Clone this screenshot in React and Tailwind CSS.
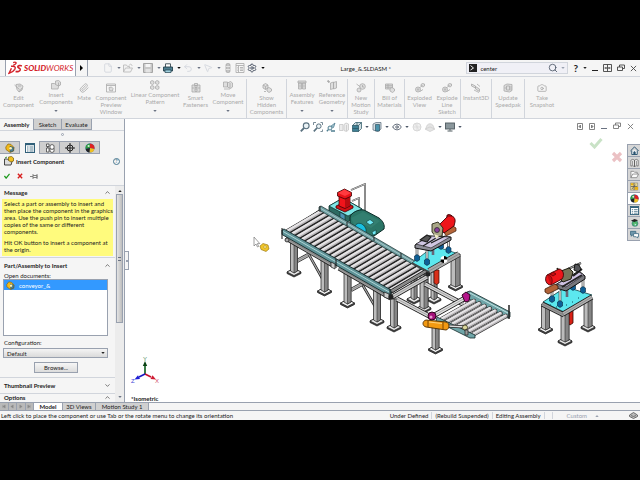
import React, { useState } from 'react';
import clsx from 'clsx';
import {
  Camera, ChevronDown, ChevronUp, Eye, File, MousePointer2, Paperclip, Search, Settings, Undo2,
} from 'lucide-react';

/* ---------- ribbon icons ---------- */

const gray = { fill: '#dedede', stroke: '#a9a9a9', strokeWidth: 0.8 };

const EditIcon = ({ className }) => (
  <svg viewBox="0 0 10 10" className={className} {...gray}>
    <path d="M2 1.500l4-.5 3 2-1 4-3 2-2-2.500z" /><path d="M.5 2l5 4.500M4 3h3M5 9l3-4" fill="none" />
  </svg>
);
const InsertIcon = ({ className }) => (
  <svg viewBox="0 0 10 10" className={className} {...gray}>
    <path d="M.5 9V3.500h3l1 1h3.500L7 9z" /><path d="M4.500 1l3-.5 2 1.500v3L7.500 6 4.500 4.500zM7.500 2.500V6" />
  </svg>
);
const PreviewIcon = ({ className }) => (
  <svg viewBox="0 0 10 10" className={className} {...gray}>
    <path d="M.5 1h9v8h-9z" fill="none" /><path d="M.5 2.500h9" /><path d="M3 4.500L5.500 4 7 5.500 6.500 8l-3-.5z" />
  </svg>
);
const PatternIcon = ({ className }) => (
  <svg viewBox="0 0 10 10" className={className} {...gray}>
    <path d="M.5 1.500l1.500-1 2 1v2l-1.500 1-2-1zM5.500 1.500l1.500-1 2 1v2l-1.500 1-2-1zM.5 6.500l1.500-1 2 1v2l-1.500 1-2-1zM5.500 6.500l1.500-1 2 1v2l-1.500 1-2-1z" />
  </svg>
);
const FastenerIcon = ({ className }) => (
  <svg viewBox="0 0 10 10" className={className} {...gray}>
    <path d="M1 2h8v7H1z" /><path d="M3.500.5h3v2h-3zM4 2.500h2V8L5 9 4 8zM4 4.500h2M4 6h2M1 5h2M7 5h2" />
  </svg>
);
const MoveIcon = ({ className }) => (
  <svg viewBox="0 0 10 10" className={className} {...gray}>
    <path d="M.5 2h4v5h-4zM4.500 3l3-1.500 2 1.500v4l-2 1.500-3-1.500zM7 3v5" /><path d="M1 9h6" fill="none" />
  </svg>
);
const PartsIcon = ({ className }) => (
  <svg viewBox="0 0 10 10" className={className} {...gray}>
    <path d="M1 2l2.500-1.500L6 2v3L3.500 6.500 1 5zM5 5.500l2-1 2.500 1.500v2L7 9.500 5 8z" /><path d="M1 2l2.500 1.500L6 2M3.500 3.500v3M2 8.500h2" fill="none" />
  </svg>
);
const FeatureIcon = ({ className }) => (
  <svg viewBox="0 0 10 10" className={className} {...gray}>
    <path d="M1 1h8v2H1zM1.500 3h3v6h-3zM5.500 3h3v6h-3z" /><path d="M3 4.500v3M7 4.500v3" />
  </svg>
);
const ReferenceIcon = ({ className }) => (
  <svg viewBox="0 0 10 10" className={className} {...gray}>
    <path d="M3.500 3l3-1v6.500l-3 1zM6.500 2.500l3-1V8l-3 1z" /><path d="M1.500 0v3M0 1.500h3M.5.5l2 2" fill="none" />
  </svg>
);
const MotionIcon = ({ className }) => (
  <svg viewBox="0 0 10 10" className={className} {...gray}>
    <circle cx="6.500" cy="3.500" r="2.800" /><circle cx="3" cy="7" r="2" /><path d="M.5 1l4 3M6.500 2v2h1.500" fill="none" />
  </svg>
);
const BillIcon = ({ className }) => (
  <svg viewBox="0 0 10 10" className={className} {...gray}>
    <path d="M.5 1h7v5h-7zM.5 2.700h7M.5 4.300h7M3 1v5" /><path d="M5 5.500l2-1 2.500 1.500v2L7.500 9.500 5 8z" />
  </svg>
);
const ExplodeIcon = ({ className }) => (
  <svg viewBox="0 0 10 10" className={className} {...gray}>
    <circle cx="3" cy="6.500" r="2.500" /><circle cx="3" cy="6.500" r="0.800" /><path d="M6 1.500l1.500-1L9.500 1v2L8 4 6 3z" /><path d="M4.500 5l3-3M5 8.500l3-2" fill="none" />
  </svg>
);
const InstantIcon = ({ className }) => (
  <svg viewBox="0 0 10 10" className={className} {...gray}>
    <path d="M.5 1l4 2v2l-4-2zM4.500 3.500l4 2.500v2.500l-4-2.500z" /><path d="M3 7l5 2.500M6 1l3 2.500" fill="none" />
  </svg>
);
const SpeedIcon = ({ className }) => (
  <svg viewBox="0 0 10 10" className={className} {...gray}>
    <path d="M1 2.500L4 1l5 .5v6L6.500 9 1 8z" /><path d="M3.500 3h3v4h-3zM8 3v4.500M1.500 5h2" />
  </svg>
);

const ribbonGroups = [
  [
    { label: ['Edit', 'Component'], icon: EditIcon, width: 'w-[37px]' },
    { label: ['Insert', 'Components'], icon: InsertIcon, width: 'w-[38px]', arrow: true },
    { label: ['Mate'], icon: Paperclip, width: 'w-[18px]' },
    { label: ['Component', 'Preview', 'Window'], icon: PreviewIcon, width: 'w-[36px]' },
    { label: ['Linear Component', 'Pattern'], icon: PatternIcon, width: 'w-[52px]', arrow: true },
    { label: ['Smart', 'Fasteners'], icon: FastenerIcon, width: 'w-[29px]' },
    { label: ['Move', 'Component'], icon: MoveIcon, width: 'w-[36px]', arrow: true },
  ],
  [{ label: ['Show', 'Hidden', 'Components'], icon: PartsIcon, width: 'w-[39px]' }],
  [
    { label: ['Assembly', 'Features'], icon: FeatureIcon, width: 'w-[30px]', arrow: true },
    { label: ['Reference', 'Geometry'], icon: ReferenceIcon, width: 'w-[30px]', arrow: true },
  ],
  [{ label: ['New', 'Motion', 'Study'], icon: MotionIcon, width: 'w-[26px]' }],
  [{ label: ['Bill of', 'Materials'], icon: BillIcon, width: 'w-[29px]' }],
  [
    { label: ['Exploded', 'View'], icon: ExplodeIcon, width: 'w-[29px]' },
    { label: ['Explode', 'Line', 'Sketch'], icon: ExplodeIcon, width: 'w-[26px]' },
  ],
  [{ label: ['Instant3D'], icon: InstantIcon, width: 'w-[30px]' }],
  [{ label: ['Update', 'Speedpak'], icon: SpeedIcon, width: 'w-[32px]' }],
  [{ label: ['Take', 'Snapshot'], icon: Camera, width: 'w-[34px]' }],
];

const Arrow = ({ className }) => (
  <svg viewBox="0 0 5 3" className={clsx('h-[2px] w-[4px] shrink-0', className)}>
    <path d="M0 0h5L2.500 3z" fill="currentColor" />
  </svg>
);

/* ---------- title bar ---------- */

const Logo = () => (
  <div className="flex h-full items-center gap-px border-x border-gray-400 bg-white px-[2px]">
    <svg viewBox="0 0 16 14" className="h-[14px] w-[15px]" fill="none" stroke="#d3222a">
      <path d="M5.500 1.200c2-.8 3.800-.4 3 1C7.900 3.200 6.600 3.800 5.500 4.200" strokeWidth="1.400" />
      <path d="M3.200 5.200c4-.6 5.300.9 4 3.200-1.200 2-3.700 3.600-6.200 4.300 1-2 2-3.700 2.600-5.400" strokeWidth="1.500" />
      <path d="M14.800 4.800c-2-.9-4.300-.3-4.400.9-.1 1.300 3.100 1.500 2.700 3.300-.4 1.600-3 2.300-5 1.600" strokeWidth="1.700" />
    </svg>
    <span className="text-[8px] leading-[10px] text-[#d3222a] italic">
      <b className="font-black">SOLID</b>WORKS
    </span>
  </div>
);

const OpenIcon = ({ className }) => (
  <svg viewBox="0 0 10 10" className={className} fill="#f2f2f2" stroke="#bcbcbc" strokeWidth="0.900">
    <path d="M.5 9V2h3l1 1.500h2V5M.5 9l2-4h7l-2 4z" /><path d="M6 2.500c1-2 3-1.500 3 .5" fill="none" />
  </svg>
);
const SaveIcon = ({ className }) => (
  <svg viewBox="0 0 10 10" className={className}>
    <path d="M.5.5h9v9h-9z" fill="#c9c9c9" stroke="#a5a5a5" />
    <path d="M2.500 1h5v3h-5z" fill="#f5f5f5" /><path d="M2.500 6h5v3.500h-5z" fill="#e4e4e4" />
  </svg>
);
const PrintIcon = ({ className }) => (
  <svg viewBox="0 0 10 10" className={className}>
    <path d="M2.500 4.500V.8h5v3.700" fill="#fff" stroke="#3a4b52" strokeWidth="0.900" />
    <path d="M.5 4h9v4h-9z" fill="#4f7f90" stroke="#24414d" strokeWidth="0.900" />
    <path d="M2 7h6v2.500H2z" fill="#9fd0de" stroke="#24414d" strokeWidth="0.700" />
  </svg>
);
const PillIcon = ({ className }) => (
  <svg viewBox="0 0 10 10" className={className}>
    <rect x="3" y="0.500" width="4" height="9" rx="1.500" fill="#c4c4c4" stroke="#a0a0a0" strokeWidth="0.700" />
    <path d="M3 3.500h4M3 6.500h4" stroke="#eee" strokeWidth="0.800" />
  </svg>
);
const SheetIcon = ({ className }) => (
  <svg viewBox="0 0 10 10" className={className} fill="#f6f6f6" stroke="#b0b0b0" strokeWidth="0.900">
    <path d="M1 .5h8v9H1zM1 2.500h8M3.500 2.500v7M5 4.500h3M5 6h3M5 7.500h3M2 4.500h.6M2 6h.6M2 7.500h.6" />
  </svg>
);

const QuickButton = ({ icon: Icon, label, tone = 'text-gray-300', arrow = true, dark }) => (
  <button aria-label={label} className="flex items-center gap-[4px]">
    <Icon className={clsx('size-[10px]', tone)} strokeWidth={2} />
    {arrow && <Arrow className={dark ? 'text-black' : 'text-gray-500'} />}
  </button>
);

const WindowIcons = ({ stroke = '#444', split }) => (
  <>
    <button aria-label="Minimize" className="flex h-[10px] w-[6px] items-end pb-[2px]">
      <span className="h-px w-full bg-current" />
    </button>
    {split && (
      <button aria-label="Tile">
        <svg viewBox="0 0 9 8" className="h-[8px] w-[9px]" fill="none" stroke={stroke} strokeWidth="0.900">
          <path d="M.5.5h8v7h-8zM4.500.5v7M1.500 4h2M5.500 4h2M3 3v2M6 3v2" />
        </svg>
      </button>
    )}
    <button aria-label="Restore">
      <svg viewBox="0 0 8 8" className="size-[8px]" fill="none" stroke={stroke} strokeWidth="0.900">
        <path d="M2.500 3V1h5v3.500H5.500M.5 3h5v3.500h-5z" />
      </svg>
    </button>
    <button aria-label="Close">
      <svg viewBox="0 0 8 8" className="size-[7px]" fill="none" stroke={stroke} strokeWidth="1">
        <path d="M1 1l6 6M7 1L1 7" />
      </svg>
    </button>
  </>
);

const TitleBar = () => (
  <header className="flex h-[17px] items-center border-b border-gray-300 bg-[#f5f5f5] pl-[5px]">
    <Logo />
    <button aria-label="Show menu" className="flex h-full items-center border-r border-gray-400 px-[4px]">
      <svg viewBox="0 0 3 6" className="h-[6px] w-[3px]"><path d="M0 0l3 3-3 3z" /></svg>
    </button>
    <nav aria-label="Quick access" className="flex items-center gap-[2px] pl-[15px]">
      <QuickButton icon={File} label="New" />
      <QuickButton icon={OpenIcon} label="Open" />
      <QuickButton icon={SaveIcon} label="Save" />
      <QuickButton icon={PrintIcon} label="Print" dark />
      <QuickButton icon={Undo2} label="Undo" />
      <QuickButton icon={MousePointer2} label="Select" />
      <QuickButton icon={PillIcon} label="Rebuild" arrow={false} />
      <QuickButton icon={SheetIcon} label="File properties" arrow={false} />
      <QuickButton icon={Settings} label="Options" tone="text-gray-700" dark />
    </nav>
    <h1 className="flex-1 text-center">Large_&amp;.SLDASM *</h1>
    <label className="flex h-[12px] w-[102px] items-center gap-[3px] border border-gray-300 bg-[#f0f0f6] px-[2px]">
      <svg viewBox="0 0 8 8" className="size-[8px] shrink-0">
        <rect width="8" height="8" fill="#222" />
        <path d="M1.500 1.500l3 2.500-3 2" stroke="#eee" fill="none" />
      </svg>
      <input aria-label="Search" defaultValue="center" className="min-w-0 flex-1 outline-none" />
      <Search className="size-[10px] text-gray-600" />
      <Arrow className="text-gray-400" />
    </label>
    <div className="flex items-center gap-[5px] pr-[3px] pl-[5px]">
      <button aria-label="Help" className="text-[10px] leading-[10px] font-bold">?</button>
      <Arrow />
      <WindowIcons split />
    </div>
  </header>
);

/* ---------- ribbon ---------- */

const RibbonItem = ({ item }) => {
  const Icon = item.icon;
  return (
    <button className={clsx('flex flex-col items-center text-[#ababab]', item.width, !item.arrow && 'pt-[3px]')}>
      <Icon className="mb-px size-[10px]" />
      {item.label.map((line) => (
        <span key={line} className="whitespace-nowrap">{line}</span>
      ))}
      {item.arrow && <Arrow className="mt-[5px] text-gray-500" />}
    </button>
  );
};

const Ribbon = () => (
  <div className="flex h-[42px] border-b border-gray-300 bg-[#f5f5f5] pt-[2px]">
    {ribbonGroups.map((group, i) => (
      <div key={i} className={clsx('flex items-start pt-px', i < ribbonGroups.length - 1 && 'border-r border-gray-300')}>
        {group.map((item) => <RibbonItem key={item.label.join(' ')} item={item} />)}
      </div>
    ))}
  </div>
);

/* ---------- property manager ---------- */

const PartIcon = ({ className }) => (
  <svg viewBox="0 0 10 10" className={className}>
    <path d="M.8 4L3 1l3 .4L9 4.500 8.600 8 5 9.400 1 6.500z" fill="#f2b918" stroke="#8a6408" strokeWidth="0.700" />
    <path d="M5 3.200l3.700 1.400L8.300 8 5.200 9z" fill="#4c7f95" stroke="#27485a" strokeWidth="0.500" />
    <circle cx="5.600" cy="5.200" r="1.300" fill="#fff3b0" />
  </svg>
);

const ListIcon = ({ className }) => (
  <svg viewBox="0 0 10 10" className={className}>
    <rect x="0.500" y="0.500" width="9" height="9" fill="#fff" stroke="#31607a" />
    <path d="M1 1.500h8" stroke="#31607a" strokeWidth="1.400" />
    <path d="M2 4h1.500M2 6h1.500M2 8h1.500M4.500 4H8.500M4.500 6H8.500M4.500 8H8.500" stroke="#31607a" strokeWidth="0.800" />
  </svg>
);

const ConfigIcon = ({ className }) => (
  <svg viewBox="0 0 10 10" className={className} fill="#fff" stroke="#444" strokeWidth="0.800">
    <path d="M1.500 1h2.500v2.500H1.500zM1.500 5h2.500v4H1.500z" />
    <path d="M5 2.500l2-1 2 1v6l-2 1-2-1zM5 5.500l2 1 2-1M2.700 3.500V5" />
  </svg>
);

const TargetIcon = ({ className }) => (
  <svg viewBox="0 0 10 10" className={className} fill="none" stroke="#222" strokeWidth="1">
    <circle cx="5" cy="5" r="3" />
    <path d="M5 0v10M0 5h10" />
  </svg>
);

const BallIcon = ({ className }) => (
  <svg viewBox="0 0 10 10" className={className}>
    <circle cx="5" cy="5" r="4.500" fill="#2a62c9" />
    <path d="M5 5L5 .5A4.500 4.500 0 0 0 .6 6z" fill="#2f9a3f" />
    <path d="M5 5V.5A4.500 4.500 0 0 1 9.400 6z" fill="#e02020" />
    <path d="M5 5L.6 6a4.500 4.500 0 0 0 4 3.500z" fill="#222" />
    <path d="M5 5l4.400 1a4.500 4.500 0 0 1-4.800 3.500z" fill="#f0c020" />
    <circle cx="3.600" cy="3" r="1.100" fill="#fff" opacity="0.800" />
  </svg>
);

const managerTabs = [
  { label: 'Feature tree', icon: PartIcon },
  { label: 'Properties', icon: ListIcon },
  { label: 'Configurations', icon: ConfigIcon },
  { label: 'Dimensions', icon: TargetIcon },
  { label: 'Display', icon: BallIcon },
];

const SectionHeader = ({ title, open = true }) => (
  <button className="flex w-full items-center justify-between pr-[2px] pl-[2px] font-bold">
    {title}
    {open ? <ChevronUp className="size-[7px]" /> : <ChevronDown className="size-[7px]" />}
  </button>
);

const PropertyManager = () => {
  const [config, setConfig] = useState('Default');

  return (
    <aside className="flex w-[125px] shrink-0 flex-col border-r border-gray-400 bg-[#f5f5f5]">
      <div role="tablist" className="flex h-[12px] border-b border-gray-300">
        <button role="tab" className="w-[33px] font-bold">Assembly</button>
        <button role="tab" className="w-[29px] border border-t-0 border-gray-400 bg-[#d0d0d0]">Sketch</button>
        <button role="tab" className="w-[30px] border-r border-b border-gray-400 bg-[#d0d0d0]">Evaluate</button>
      </div>
      <div className="flex h-[10px] justify-center pt-[2px]">
        <span className="size-[3px] rounded-full border border-gray-400" />
      </div>
      <div role="tablist" className="flex h-[13px]">
        {managerTabs.map((tab, i) => (
          <button
            key={tab.label}
            role="tab"
            aria-label={tab.label}
            className={clsx(
              'flex w-[20px] items-center justify-center border-r border-gray-400',
              i !== 1 && 'border-y bg-[#cfcfcf]',
            )}
          >
            <tab.icon className="size-[10px]" />
          </button>
        ))}
      </div>

      <div className="border-b border-gray-300 px-[4px] pt-px pb-[4px]">
        <div className="flex h-[12px] items-center gap-[2px]">
          <svg viewBox="0 0 10 10" className="size-[10px]">
            <path d="M.5 9V3h3l1 1h4L7 9z" fill="#ddd" stroke="#333" strokeWidth="0.900" />
            <path d="M4.500 1l3-.5L9.500 2v3L7 6 4.500 4.500z" fill="#f2c01f" stroke="#735a0a" strokeWidth="0.700" />
            <path d="M1 2l2-1" stroke="#3a8a3a" />
          </svg>
          <h2 className="flex-1 font-bold">Insert Component</h2>
          <button aria-label="Help" className="size-[7px] rounded-full border border-[#4a7a92] text-[5px] leading-[5px] font-bold text-[#4a7a92]">?</button>
        </div>
        <div className="mt-[4px] flex h-[10px] items-center gap-[7px]">
          <button aria-label="OK">
            <svg viewBox="0 0 7 7" className="size-[6px]"><path d="M.5 3.500l2 2.500 4-5" fill="none" stroke="#1d9a1d" strokeWidth="1.500" /></svg>
          </button>
          <button aria-label="Cancel">
            <svg viewBox="0 0 7 7" className="size-[6px]"><path d="M1 1l5 5M6 1L1 6" fill="none" stroke="#d81e1e" strokeWidth="1.600" /></svg>
          </button>
          <button aria-label="Keep visible">
            <svg viewBox="0 0 8 7" className="h-[7px] w-[8px]"><path d="M0 3.500h3M3 1v5M3 2.500h4v2H3M7 1v5" fill="none" stroke="#777" strokeWidth="0.900" /></svg>
          </button>
        </div>
      </div>

      <div className="flex min-h-0 flex-1 overflow-hidden">
        <div className="min-w-0 flex-1 overflow-hidden">
          <section className="border-b border-gray-300 px-[2px] pt-[3px] pb-px">
            <SectionHeader title="Message" />
            <div className="mt-[3px] space-y-[4px] bg-[#fffb7d] pt-px pb-[3px] pl-[2px] whitespace-nowrap">
              <p>
                Select a part or assembly to insert and<br />
                then place the component in the graphics<br />
                area. Use the push pin to insert multiple<br />
                copies of the same or different<br />
                components.
              </p>
              <p>
                Hit OK button to insert a component at<br />
                the origin.
              </p>
            </div>
          </section>

          <section className="border-b border-gray-300 px-[2px] pt-[4px] pb-[4px]">
            <SectionHeader title="Part/Assembly to Insert" />
            <p className="mt-[3px] pl-[2px]">Open documents:</p>
            <ul className="mr-[5px] ml-[1px] h-[57px] border border-gray-400 bg-white">
              <li className="flex h-[10px] items-center gap-[4px] bg-[#3399ff] pl-[2px] text-white">
                <PartIcon className="size-[9px]" />
                conveyor_&amp;
              </li>
            </ul>
            <label htmlFor="configuration" className="mt-[3px] block pl-[2px]">Configuration:</label>
            <div className="relative mt-[2px] mr-[5px] ml-[1px]">
              <select
                id="configuration"
                value={config}
                onChange={(e) => setConfig(e.target.value)}
                className="block h-[10px] w-full appearance-none border border-gray-400 bg-linear-to-b from-[#f4f4f4] to-[#dadada] pl-[3px]"
              >
                <option>Default</option>
              </select>
              <Arrow className="pointer-events-none absolute top-[4px] right-[3px]" />
            </div>
            <button className="mt-[4px] ml-[32px] block h-[11px] w-[44px] border border-gray-400 bg-linear-to-b from-[#f6f6f6] to-[#dcdcdc]">
              Browse...
            </button>
          </section>

          <section className="border-b border-gray-300 px-[2px] py-[4px]">
            <SectionHeader title="Thumbnail Preview" open={false} />
          </section>
          <section className="px-[2px]">
            <SectionHeader title="Options" />
          </section>
        </div>
        <div className="flex w-[9px] flex-col items-center justify-between bg-[#ececec] py-[4px]">
          <Arrow className="mb-[2px] rotate-180" />
          <div className="flex min-h-0 w-[7px] flex-1 flex-col">
            <div className="flex flex-7 items-center justify-center border border-gray-400 bg-linear-to-r from-[#e4e4e4] to-[#bdbdbd]">
              <span className="h-[4px] w-[3px] border-y border-gray-500" />
            </div>
            <div className="flex-4" />
          </div>
          <Arrow className="text-gray-500" />
        </div>
      </div>
    </aside>
  );
};

/* ---------- assembly drawing ---------- */

const Leg = ({ x, top, foot, w = 7 }) => (
  <g stroke="#1a1a1a" strokeWidth="0.700">
    <path d={`M${x - 7} ${foot}l7-3.500 7 3.500v1.500l-7 3.500-7-3.500z`} fill="#444" />
    <path d={`M${x - 7} ${foot}l7-3.500 7 3.500-7 3.500z`} fill="#ececec" />
    <path d={`M${x - w / 2} ${top}h${w}V${foot - 1}l${-w / 2} 2l${-w / 2}-2z`} fill="#bcbcbc" />
    <path d={`M${x} ${top}h${w / 2}V${foot - 1}l${-w / 2} 2z`} fill="#858585" strokeWidth="0.500" />
  </g>
);

const Beam = ({ d, w = 5, fill = '#b4b4b4' }) => (
  <g fill="none">
    <path d={d} stroke="#1a1a1a" strokeWidth={w} />
    <path d={d} stroke={fill} strokeWidth={w - 1.4} />
    <path d={d} stroke="#5a5a5a" strokeWidth="0.400" />
  </g>
);

const Rollers = ({ count, x, y, dx, dy, lx, ly, w = 4.6 }) => (
  <g fill="none" strokeLinecap="round">
    {Array.from({ length: count }, (_, i) => {
      const d = `M${x + i * dx} ${y + i * dy}l${lx} ${ly}`;
      return (
        <g key={i}>
          <path d={d} stroke="#222" strokeWidth={w} />
          <path d={d} stroke="#b9b6b9" strokeWidth={w - 1.2} />
          <path d={d} stroke="#e6e4e6" strokeWidth={w - 2.6} transform="translate(-0.3 -0.6)" />
        </g>
      );
    })}
  </g>
);

const Post = ({ x, y, h = 13 }) => (
  <g>
    <path d={`M${x} ${y}v${-h}`} stroke="#333" strokeWidth="2.600" />
    <path d={`M${x} ${y}v${-h}`} stroke="#e8e8e8" strokeWidth="1.400" />
    <path d={`M${x - 2.5} ${y - 2}l2.500-1.500 2.500 1.500v4l-2.500 1.500-2.500-1.500z`} fill="#0d5f96" stroke="#06283f" strokeWidth="0.600" />
  </g>
);

const MainConveyor = () => (
  <g>
    <path d="M308 253l14 25M362 284l14 24" stroke="#222" strokeWidth="2.600" />
    <path d="M308 253l14 25M362 284l14 24" stroke="#aaa" strokeWidth="1.200" />
    <Beam d="M297 261l11-6" w={4} />
    <Beam d="M351 290l11-6" w={4} />
    <Leg x={414} top={276} foot={299} w={6} />
    <Leg x={434} top={272} foot={299} w={6} />
    <Leg x={424} top={274} foot={308} w={8} />
    <Leg x={294} top={240} foot={272} />
    <Leg x={324.5} top={259} foot={291} />
    <Leg x={347.5} top={270} foot={303} />
    <Leg x={377} top={288} foot={321} />
    <Beam d="M286 238L333 265" w={5} fill="#9c9c9c" />
    <Beam d="M339 268L391 298" w={5} fill="#9c9c9c" />
    <path d="M284 233L320 209 427 271 391 294z" fill="#2a2a2a" />
    <Rollers count={22} x={288} y={231} dx={4.85} dy={2.83} lx={34} ly={-20} />
    {/* side rails */}
    <path d="M319 207l2-1 106 62v3l-1 1-107-62z" fill="#6f9fa2" stroke="#14292a" strokeWidth="0.700" />
    <path d="M320 208l106 61.500" stroke="#cfe2e2" strokeWidth="0.600" />
    <path d="M282 230l2-1 107 61v5l-2 .5-107-61z" fill="#5f9297" stroke="#14292a" strokeWidth="0.900" />
    <path d="M283 231.500l107 61" stroke="#b7dcdc" strokeWidth="0.900" />
    <path d="M282 228v11M336 259v9M390 289v8" stroke="#111" />
    <path d="M320 206v6M347 222v4M374 237v4M401 253v4" stroke="#222" />
    <path d="M331 262l4 2v5l-4-2zM384 292l5 2v5l-5-2z" fill="#ccc" stroke="#111" strokeWidth="0.700" />
    <circle cx="287" cy="240" r="2" fill="#aaa" stroke="#111" strokeWidth="0.700" />
    <Beam d="M392 291l34-20" w={4} fill="#9a9a9a" />
    <Beam d="M392 297l35-20" w={5} fill="#d0d0d0" />
    <Leg x={394} top={299} foot={327} />
    <circle cx="391" cy="297" r="2.500" fill="#222" />
    <circle cx="428" cy="274" r="2.500" fill="#222" />
  </g>
);

const DriveUnit = () => (
  <g strokeLinejoin="round">
    <path d="M351 190l14-6v30M352 201l7-3v11" fill="none" stroke="#444" strokeWidth="1.800" />
    <path d="M351 190l14-6v30M352 201l7-3v11" fill="none" stroke="#ddd" strokeWidth="0.800" />
    <path d="M329 206l14-8 19 11v6l-15 7-18-10z" fill="#2c6b62" stroke="#0b2b27" strokeWidth="0.800" />
    <path d="M329 206l14-8 19 11-14 7z" fill="#7fe6e6" stroke="#0b2b27" strokeWidth="0.700" />
    <path d="M345 215v12l-5-3v-12z" fill="#4b94b5" stroke="#0b2b27" strokeWidth="0.600" />
    <path d="M350 217c1-4 8-8 14-7l15 8c4 3 6 7 5 11l-10 7c-4 1-8 0-11-2l-13-8z" fill="#2b7566" stroke="#0b2b27" />
    <path d="M351 218l12-6 17 9-9 7c-8-5-13-4-16-1z" fill="#337f70" />
    <path d="M355 226c2-4 8-4 11 3v5l-11-6z" fill="#18bfe0" stroke="#0b2b27" strokeWidth="0.600" />
    <path d="M366 222l4-2.500 4 3-4 2.500zM372 232l4-2v4l-3 1z" fill="#6fe8f4" stroke="#0b2b27" strokeWidth="0.500" />
    <path d="M336 206l9-4 8 4v2l-8 4-9-4z" fill="#d00e14" stroke="#3f0204" strokeWidth="0.800" />
    <path d="M339 195h11v11l-5 2.500-6-2.500z" fill="#f0141b" stroke="#3f0204" strokeWidth="0.800" />
    <path d="M345 197v11l5-2.500V195z" fill="#b90c11" />
    <path d="M337.500 192.500l7-3.500 7 3.500v3.500l-6.500 3-7.500-3z" fill="#e81219" stroke="#3f0204" strokeWidth="0.800" />
    <path d="M338 193l6.500-3.500 6.500 3.500-6 3z" fill="#ff3a3f" />
  </g>
);

const StationOne = () => (
  <g strokeLinejoin="round">
    <path d="M434 270h5v13l-2.500 1.500-2.500-1.500z" fill="#d9301a" stroke="#360a04" strokeWidth="0.700" />
    <Leg x={455.5} top={254} foot={286} w={9} />
    <path d="M412 263l22-17 25 8-30 18z" fill="#5ce7ee" stroke="#0d3a3e" strokeWidth="0.700" />
    <Beam d="M429 271l30-17" w={6} fill="#aaa" />
    <path d="M412 263l17 9" stroke="#444" strokeWidth="1.600" />
    <circle cx="444" cy="259.500" r="3.500" fill="#fff" />
    <path d="M444 256a3.500 3.500 0 0 1 3.500 3.500H444zM444 263a3.500 3.500 0 0 1-3.500-3.500H444z" fill="#000" />
    <Post x={441} y={246} />
    <Post x={448.5} y={250} />
    <path d="M433 246v9" stroke="#667" strokeWidth="2.600" />
    <Post x={417} y={258} />
    <Post x={427} y={262} />
    <path d="M415 245l14-9 22 1v3l-20 11-16-3z" fill="#8d8d96" stroke="#111" />
    <path d="M416 244l14-8 20 1-19 11z" fill="#cfc6e2" stroke="#222" strokeWidth="0.700" />
    <path d="M420 240l7-5 4 2-4 5zM431 243l14-7M423 246l13-8" fill="#555" stroke="#1c1c1c" strokeWidth="1.200" />
    <path d="M443 230l10-4 3 2v3l-10 5z" fill="#b5653a" stroke="#3a1a08" strokeWidth="0.700" />
    <path d="M438 226l9-9c4-3 9 0 8 5l-1 4-10 7z" fill="#ee161b" stroke="#3f0204" strokeWidth="0.900" />
    <path d="M447 217c-1-3 3-3 5-1" fill="#b00d12" stroke="#3f0204" />
    <path d="M432 224l6-2 5 6-1 8-6 1-4-5z" fill="#a9a787" stroke="#262514" strokeWidth="0.900" />
    <circle cx="437" cy="230" r="2.500" fill="#8a3f9a" stroke="#222" strokeWidth="0.700" />
    <path d="M434 234l5 2-3 3z" fill="#f3edc8" />
  </g>
);

const Transfer = () => (
  <g strokeLinejoin="round">
    <Leg x={435.5} top={326} foot={349} />
    <Beam d="M397 299l36 19" w={5} fill="#d6d6d6" />
    <Beam d="M425 284l38 20" w={5} fill="#d6d6d6" />
    <path d="M467 292l3-1 40 21v5l-3 1-40-20z" fill="#6fa5a8" stroke="#14292a" strokeWidth="0.800" />
    <path d="M470 293l38 20" stroke="#c4e2e2" strokeWidth="1" />
    <Rollers count={7} x={442} y={319} dx={5.3} dy={2.5} lx={32} ly={-18} w={4.4} />
    <Beam d="M433 316l34-19" w={5} fill="#e2e2e2" />
    <path d="M509 305v14" stroke="#222" strokeWidth="1.500" />
    <path d="M437 317l38 18v3l-5 0-34-17z" fill="#6fa5a8" stroke="#14292a" strokeWidth="0.800" />
    <circle cx="432" cy="316" r="4" fill="#a4127a" stroke="#31041f" />
    <circle cx="431" cy="317" r="1.500" fill="#e59ccf" />
    <path d="M462 295l4-3 4 3-1 6-4 1z" fill="#b3158a" stroke="#31041f" />
    <path d="M448 326l17 1" stroke="#222" strokeWidth="3" />
    <path d="M448 326l17 1" stroke="#ddd" strokeWidth="1.600" />
    <path d="M426 320l20 2c4 1 4 7 0 8l-20-3c-4-1-4-6 0-7z" fill="#f39a12" stroke="#4e2c00" strokeWidth="0.900" />
    <path d="M443 321v9M428 320v7" stroke="#7c4700" />
    <path d="M429 322l13 1.500" stroke="#ffd27a" />
    <circle cx="465" cy="327.500" r="2.500" fill="#d8d59a" stroke="#33321a" strokeWidth="0.800" />
    <path d="M465 330v5h3v-5z" fill="#999" stroke="#222" strokeWidth="0.700" />
  </g>
);

const StationTwo = () => (
  <g strokeLinejoin="round">
    <path d="M567 310h6v13l-3 2-3-2z" fill="#d92015" stroke="#360a04" strokeWidth="0.800" />
    <Leg x={545.5} top={304} foot={329} w={8} />
    <Leg x={588} top={298} foot={327} w={8} />
    <Leg x={565} top={313} foot={341} w={8} />
    <path d="M543 302l23-15 26 8-28 17z" fill="#5ce7ee" stroke="#0d3a3e" strokeWidth="0.800" />
    <Beam d="M542 304l22 11" w={5} fill="#9a9a9a" />
    <Beam d="M563 314l29-17" w={5} fill="#b2b2b2" />
    <path d="M550 305h1M556 307h1M566 305h1M572 302h1M578 298h1M567 295h1" stroke="#104a58" strokeWidth="1.200" />
    <path d="M567 297v-14" stroke="#667" strokeWidth="2.600" />
    <Post x={573} y={287} />
    <Post x={583} y={290} />
    <Post x={552} y={299} />
    <Post x={560} y={304} />
    <path d="M555 285l24-14 6 5v3l-19 12-10-3z" fill="#77777d" stroke="#111" />
    <path d="M557 284l22-12 5 3-18 12z" fill="#cfc2e4" stroke="#222" strokeWidth="0.700" />
    <path d="M568 269l13-6M573 276l9-7M562 287l20-12" stroke="#222" strokeWidth="2" />
    <path d="M568 269l13-6" stroke="#ccc" strokeWidth="0.800" />
    <path d="M557 268l4 3 8-3 4 4-2 7-8 3-4-4z" fill="#77745a" stroke="#1c1b10" />
    <path d="M575 264l4 1 2 4-3 3-4-2z" fill="#55565a" stroke="#111" />
    <path d="M545 289l10-5 3 2v3l-10 5-3-2z" fill="#b06338" stroke="#3a1a08" strokeWidth="0.800" />
    <path d="M547 275l12-6c4 0 6 6 3 10l-11 6c-5 0-7-6-4-10z" fill="#ee161b" stroke="#3f0204" strokeWidth="0.900" />
    <path d="M547 275c4-1 7 5 4 10M550 274l3-2 3 2-3 2z" fill="#c40d12" stroke="#5a0306" strokeWidth="0.700" />
  </g>
);

const Assembly = () => (
  <svg viewBox="125 119 515 283" className="block h-full w-full" role="img" aria-label="Conveyor assembly">
    <DriveUnit />
    <MainConveyor />
    <StationOne />
    <Transfer />
    <StationTwo />
    {/* cursor with the part to place */}
    <path d="M254 237v9l2-2 1.500 3 1.200-.6-1.400-2.800h2.500z" fill="#fff" stroke="#777" strokeWidth="0.700" />
    <path d="M260 246l3-2.500 5 1.500 1 4-3 2.500-5-2z" fill="#f0c52a" stroke="#8f6c0a" strokeWidth="0.600" />
    <circle cx="265" cy="247" r="1.300" fill="#fff0a0" stroke="#8f6c0a" strokeWidth="0.400" />
    {/* axis triad */}
    <path d="M145 374v-9" stroke="#0a5c1a" strokeWidth="1.600" />
    <path d="M145 361l2.200 5h-4.400z" fill="#0a4314" />
    <path d="M145 374l6 3" stroke="#c8102e" strokeWidth="1.600" />
    <path d="M156 379.500l-5.500-.6 2-3.600z" fill="#d01c34" />
    <path d="M145 374l-6 3" stroke="#1a1ac0" strokeWidth="1.600" />
    <path d="M134.500 379.500l5.500-.6-2-3.600z" fill="#1d1dd6" />
    <g fontSize="6" fontFamily="Liberation Sans, sans-serif">
      <text x="143" y="361" fill="#4c8b58">Y</text>
      <text x="155" y="383" fill="#d0506a">X</text>
      <text x="131" y="383" fill="#4646d8">Z</text>
    </g>
  </svg>
);

/* ---------- viewport ---------- */

const ZoomFitIcon = ({ className }) => (
  <svg viewBox="0 0 10 10" className={className} fill="none" stroke="#5b7280">
    <circle cx="6.200" cy="3.800" r="2.900" fill="#eaf2f5" strokeWidth="1.100" /><path d="M4 6L.8 9.300" strokeWidth="1.800" />
  </svg>
);
const ZoomAreaIcon = ({ className }) => (
  <svg viewBox="0 0 10 10" className={className} fill="none" stroke="#5b7280">
    <path d="M.5 3V.5H3M7.500.5h2V3M9.500 7.500v2h-2" strokeWidth="0.800" />
    <circle cx="5.800" cy="4.200" r="2.300" fill="#eaf2f5" /><path d="M4 6L.8 9.300" strokeWidth="1.700" />
  </svg>
);
const PreviousIcon = ({ className }) => (
  <svg viewBox="0 0 10 10" className={className} fill="none" stroke="#4f7e90">
    <path d="M9 1L4.500 4.500l3 1z" fill="#a8c8d4" strokeWidth="0.800" /><circle cx="4" cy="6" r="2" fill="#eaf2f5" /><path d="M2.500 7.500L.8 9.300M5 9h4" strokeWidth="1.300" />
  </svg>
);
const SectionIcon = ({ className }) => (
  <svg viewBox="0 0 10 10" className={className} fill="#ececec" stroke="#c8c8c8" strokeWidth="0.800">
    <path d="M.5 2.500h3.500v6H.5zM5 2.500L7 1l2.500 1v6L7.500 9.500 5 8.500zM7.500 3v6" />
  </svg>
);
const CubeIcon = ({ className }) => (
  <svg viewBox="0 0 10 10" className={className}>
    <path d="M.5 3.500h6v6h-6z" fill="#3f8094" stroke="#24505f" strokeWidth="0.700" />
    <path d="M.5 3.500l3-3h6v6l-3 3v-6z" fill="#cfdde1" stroke="#24505f" strokeWidth="0.700" />
    <path d="M6.500 3.500l3-3M5 .5v3M.5 6.500h6" stroke="#24505f" strokeWidth="0.700" />
  </svg>
);
const CylinderIcon = ({ className }) => (
  <svg viewBox="0 0 10 10" className={className}>
    <path d="M1 2l3-1.500h5V7L6 9.500 1 8z" fill="#d4dde0" stroke="#567" strokeWidth="0.700" />
    <path d="M3.500 2.500h4v6.500h-4z" fill="#4b93ab" stroke="#245" strokeWidth="0.600" />
  </svg>
);
const PaleBallIcon = ({ className }) => (
  <svg viewBox="0 0 10 10" className={className} stroke="#d8d8d8" fill="#efefef">
    <circle cx="5" cy="5" r="4" /><path d="M5 1v8M1 5h8M3 2l4 6" strokeWidth="0.700" />
  </svg>
);
const SceneIcon = ({ className }) => (
  <svg viewBox="0 0 10 10" className={className} stroke="#cfcfcf" fill="#e4e4e4" strokeWidth="0.800">
    <path d="M1 7c0-7 8-7 8 0z" /><path d="M0 7l5-2 5 2-5 2.500z" />
  </svg>
);
const MonitorIcon = ({ className }) => (
  <svg viewBox="0 0 10 10" className={className}>
    <rect x="0.500" y="1" width="9" height="6" fill="#8b979c" stroke="#4f5a5f" strokeWidth="0.900" />
    <path d="M5 7v1.500M2.500 9h5" stroke="#4f5a5f" />
  </svg>
);

const viewTools = [
  { label: 'Zoom to fit', icon: ZoomFitIcon },
  { label: 'Zoom to area', icon: ZoomAreaIcon },
  { label: 'Previous view', icon: PreviousIcon },
  { label: 'Section view', icon: SectionIcon },
  { label: 'View orientation', icon: CubeIcon, arrow: true },
  { label: 'Display style', icon: CylinderIcon, arrow: true },
  { label: 'Hide or show items', icon: Eye, arrow: true },
  { label: 'Edit appearance', icon: PaleBallIcon },
  { label: 'Apply scene', icon: SceneIcon, arrow: true },
  { label: 'View settings', icon: MonitorIcon, arrow: true },
];

const HomeIcon = ({ className }) => (
  <svg viewBox="0 0 10 10" className={className} fill="#fff" stroke="#2c5470" strokeWidth="1.100">
    <path d="M2 5v4.500h6V5" /><path d="M.5 5.500L5 1l4.500 4.500" fill="none" /><path d="M4.300 9.500V6.500h1.400v3" fill="#2c5470" />
  </svg>
);
const LibraryIcon = ({ className }) => (
  <svg viewBox="0 0 10 10" className={className} fill="#fff" stroke="#555" strokeWidth="0.800">
    <path d="M1 2.500l2-1 2 1v7l-2-1-2 .5zM5 2.500l2-1 2 1V9L7 8.500l-2 1z" />
    <path d="M3 3v5M7 3v5" />
  </svg>
);
const FolderIcon = ({ className }) => (
  <svg viewBox="0 0 10 10" className={className} fill="#fafafa" stroke="#777" strokeWidth="0.800">
    <path d="M1 8.500V1.500h3l1 1h3v2M1 8.500l2-4h6.500l-2 4z" />
  </svg>
);
const PaletteIcon = ({ className }) => (
  <svg viewBox="0 0 10 10" className={className}>
    <path d="M.5 1h8v8h-8z" fill="#e8d890" stroke="#666" strokeWidth="0.500" />
    <path d="M1 1.500h3v2H1zM5 5.500h4v3H5z" fill="#e8b013" />
    <path d="M1 5h7M4.500 1v8M2 8l4-5" stroke="#555" strokeWidth="0.800" />
  </svg>
);
const GlobeIcon = ({ className }) => (
  <svg viewBox="0 0 10 10" className={className}>
    <circle cx="5.500" cy="6" r="3.300" fill="#4fb56a" stroke="#2b6d7d" strokeWidth="0.600" />
    <path d="M1 3l4-2 4 1.500L5 4.500z" fill="#222" />
    <path d="M5 6l2 1-1.500 2z" fill="#cdeaf2" />
  </svg>
);
const ForumIcon = ({ className }) => (
  <svg viewBox="0 0 10 10" className={className} fill="#fff" stroke="#3d6a82" strokeWidth="0.900">
    <path d="M.5 1.500h6v4H3L1.500 7V5.500h-1z" fill="#6f97ab" /><path d="M4 4h5.500v3.500H8.500V9L7 7.500H4z" />
  </svg>
);

const paneTabs = [
  { label: 'Resources', icon: HomeIcon },
  { label: 'Design library', icon: LibraryIcon },
  { label: 'File explorer', icon: FolderIcon },
  { label: 'View palette', icon: PaletteIcon },
  { label: 'Appearances', icon: BallIcon },
  { label: 'Custom properties', icon: ListIcon },
  { label: 'Learning', icon: GlobeIcon },
  { label: 'Forum', icon: ForumIcon },
];

const Viewport = () => (
  <main className="relative min-w-0 flex-1 bg-white">
    <Assembly />
    <div className="absolute top-[3px] left-[175px] flex gap-[3px] text-gray-600">
      {viewTools.map((t) => (
        <button key={t.label} aria-label={t.label} className="flex items-center gap-[3px]">
          <t.icon className="size-[10px]" />
          {t.arrow && <Arrow />}
        </button>
      ))}
    </div>
    <div className="absolute top-[2px] right-[6px] flex items-center gap-[6px] text-gray-500">
      {['Collapse left', 'Collapse right'].map((label, i) => (
        <button key={label} aria-label={label}>
          <svg viewBox="0 0 6 7" className={clsx('h-[7px] w-[6px]', i === 1 && '-scale-x-100')} fill="none" stroke="#777" strokeWidth="0.900">
            <path d="M.5.5h5v6h-5z" /><path d="M3.500 2L2 3.500 3.500 5z" fill="#777" />
          </svg>
        </button>
      ))}
      <WindowIcons stroke="#777" />
    </div>
    <button aria-label="Confirm" className="absolute top-[18px] right-[37px]">
      <svg viewBox="0 0 14 12" className="h-[12px] w-[14px]"><path d="M1.500 6l4 4 7-8" fill="none" stroke="#c9e2c6" strokeWidth="3" /></svg>
    </button>
    <button aria-label="Discard" className="absolute top-[32px] right-[17px]">
      <svg viewBox="0 0 12 12" className="size-[12px]"><path d="M2 2l8 8M10 2l-8 8" fill="none" stroke="#ebc1c4" strokeWidth="3.200" /></svg>
    </button>
    <div className="absolute top-[25px] right-0 flex w-[13px] flex-col border-t border-l border-gray-400">
      {paneTabs.map((t) => (
        <button
          key={t.label}
          aria-label={t.label}
          className={clsx('flex h-[12px] items-center justify-center border-b border-gray-400', t.label === 'Appearances' ? 'bg-white' : 'bg-[#d6d6d6]')}
        >
          <t.icon className="size-[9px]" />
        </button>
      ))}
    </div>
    <button aria-label="Collapse panel" className="absolute top-[132px] left-0 flex h-[19px] w-[4px] items-center justify-center border border-l-0 border-gray-400 bg-[#f5f5f5]">
      <span className="size-[2px] bg-gray-400" />
    </button>
    <p className="absolute bottom-0 left-[6px] font-bold">*Isometric</p>
  </main>
);

const navPaths = ['M4 1L1 3l3 2zM1 1v4', 'M4 1L1 3l3 2z', 'M1 1l3 2-3 2z', 'M1 1l3 2-3 2zM4 1v4'];
const navLabels = ['First', 'Previous', 'Next', 'Last'];

const BottomTabs = () => (
  <div className="flex h-[9px] border-y border-gray-400 bg-[#f5f5f5]">
    <div className="flex w-[34px] bg-[#b9b9b9]">
      {navPaths.map((d, i) => (
        <button key={d} aria-label={navLabels[i]} className="flex flex-1 items-center justify-center border-r border-gray-400">
          <svg viewBox="0 0 5 6" className="h-[5px] w-[4px]"><path d={d} fill="#888" stroke="#888" strokeWidth="0.500" /></svg>
        </button>
      ))}
    </div>
    <button className="w-[28px] bg-white font-bold">Model</button>
    <button className="w-[34px] border-r border-l border-gray-400 bg-[#d0d0d0]">3D Views</button>
    <button className="w-[53px] border-r border-gray-400 bg-[#d0d0d0]">Motion Study 1</button>
  </div>
);

const StatusBar = () => (
  <footer className="flex h-[9px] items-center bg-[#f5f5f5] pr-[2px] pl-[1px]">
    <span className="flex-1">Left click to place the component or use Tab or the rotate menu to change its orientation</span>
    <span className="border-r border-gray-300 px-[3px]">Under Defined</span>
    <span className="border-r border-gray-300 px-[3px]">(Rebuild Suspended)</span>
    <span className="border-r border-gray-300 px-[3px]">Editing Assembly</span>
    <button className="ml-[7px] flex items-center gap-[8px] border-l border-gray-300 pr-[30px] pl-[14px] text-gray-400">
      Custom <Arrow className="rotate-180" />
    </button>
    <svg viewBox="0 0 9 7" className="h-[7px] w-[9px]">
      <path d="M.5 3L4.500.5l4 2.500v1.500l-4 2-4-2z" fill="#bbb" stroke="#555" strokeWidth="0.800" />
      <path d="M2 3.500l2.500 1 2.500-1" fill="none" stroke="#555" strokeWidth="0.700" />
    </svg>
  </footer>
);

export default function App() {
  return (
    <div className="h-screen bg-black py-[60px] font-['Lato','Liberation_Sans',sans-serif] text-[6px] leading-[7px] text-[#222]">
      <div className="flex h-full flex-col">
        <TitleBar />
        <Ribbon />
        <div className="flex min-h-0 flex-1">
          <PropertyManager />
          <Viewport />
        </div>
        <BottomTabs />
        <StatusBar />
      </div>
    </div>
  );
}
